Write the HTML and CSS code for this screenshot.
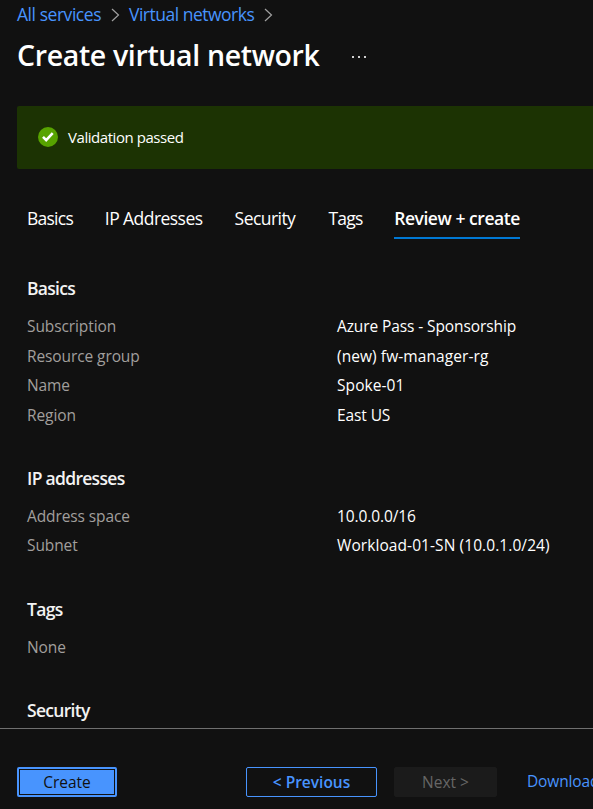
FILE: index.html
```html
<!DOCTYPE html>
<html lang="en">
<head>
<meta charset="utf-8">
<title>Create virtual network</title>
<link rel="stylesheet" href="styles.css">
</head>
<body>
<div class="page">
  <header class="header">
    <nav class="breadcrumb">
      <a class="crumb crumb-all">All services</a>
      <svg class="chevron" viewBox="0 0 9 14"><path d="M1 1l6.5 6L1 13"/></svg>
      <a class="crumb crumb-networks">Virtual networks</a>
      <svg class="chevron" viewBox="0 0 9 14"><path d="M1 1l6.5 6L1 13"/></svg>
    </nav>
    <div class="title-row">
      <h1 class="title">Create virtual network</h1>
      <svg class="more" viewBox="0 0 14 2"><path d="M0 0h2v2H0zM6 0h2v2H6zM12 0h2v2h-2z"/></svg>
    </div>
  </header>
  <div class="banner">
    <svg class="check" viewBox="0 0 20 20"><circle cx="10" cy="10" r="10"/><path d="M5 9.9l3.2 3.3 6.5-7"/></svg>
    <span class="banner-text">Validation passed</span>
  </div>
  <nav class="tabs">
    <a class="tab tab-basics">Basics</a>
    <a class="tab tab-ip">IP Addresses</a>
    <a class="tab tab-security">Security</a>
    <a class="tab tab-tags">Tags</a>
    <a class="tab tab-active">Review + create</a>
  </nav>
  <main class="content">
    <section class="section">
      <h2 class="heading">Basics</h2>
      <dl class="rows">
        <dt>Subscription</dt><dd>Azure Pass - Sponsorship</dd>
        <dt>Resource group</dt><dd class="wide">(new) fw-manager-rg</dd>
        <dt>Name</dt><dd class="wide">Spoke-01</dd>
        <dt>Region</dt><dd>East US</dd>
      </dl>
    </section>
    <section class="section">
      <h2 class="heading">IP addresses</h2>
      <dl class="rows">
        <dt>Address space</dt><dd>10.0.0.0/16</dd>
        <dt>Subnet</dt><dd class="wide">Workload-01-SN (10.0.1.0/24)</dd>
      </dl>
    </section>
    <section class="section">
      <h2 class="heading">Tags</h2>
      <dl class="rows"><dt>None</dt></dl>
    </section>
    <section class="section">
      <h2 class="heading">Security</h2>
    </section>
  </main>
  <footer class="footer">
    <button class="button create">Create</button>
    <button class="button previous">&lt; Previous</button>
    <button class="button next" disabled>Next &gt;</button>
    <a class="download">Download</a>
  </footer>
</div>
</body>
</html>
```
FILE: styles.css
```css
* { box-sizing: border-box; }
body {
  margin: 0;
  background: #111;
  color: #fff;
  font-family: "Open Sans", "Noto Sans", sans-serif;
  font-size: 15.5px;
  overflow: hidden;
}
h1, h2, dl, dd { margin: 0; }
.page { height: 809px; display: flex; flex-direction: column; overflow: hidden; }
.header { height: 106px; padding-left: 17px; flex: none; }
.breadcrumb { display: flex; align-items: center; height: 30px; color: #4894fe; font-size: 17.5px; }
.crumb { height: 30px; line-height: 28px; white-space: nowrap; }
.crumb-all { width: 94px; letter-spacing: -0.45px; }
.crumb-networks { width: 135px; letter-spacing: -0.5px; }
.chevron { width: 9px; height: 14px; flex: none; fill: none; stroke: #a0a0a0; stroke-width: 1.2; }
.chevron + .crumb { margin-left: 9px; }
.title-row { display: flex; align-items: center; height: 50px; }
.title { width: 335px; font-size: 28.5px; font-weight: 600; line-height: 50px; margin-top: -1px; letter-spacing: -0.35px; white-space: nowrap; }
.more { width: 14px; height: 2px; margin-top: 4px; fill: #d0d0d0; }
.banner {
  display: flex; align-items: center; gap: 10px; flex: none;
  height: 63px; margin-left: 17px; padding-left: 21px;
  background: #1c3303; border-radius: 2px 0 0 2px;
}
.check { width: 20px; height: 20px; margin-top: -1px; fill: #57a300; }
.check path { fill: none; stroke: #fff; stroke-width: 2.6; }
.banner-text { margin-top: -2px; font-size: 15px; letter-spacing: -0.45px; }
.tabs { display: flex; flex: none; height: 70px; padding: 28px 0 0 27px; gap: 31.8px; font-size: 17.5px; }
.tab { height: 42px; line-height: 42px; white-space: nowrap; letter-spacing: -0.75px; }
.tab-basics { width: 46px; }
.tab-ip { width: 98px; letter-spacing: -0.55px; }
.tab-security { width: 62px; letter-spacing: -0.55px; }
.tab-tags { width: 34px; }
.tab-active { width: 126px; font-weight: 600; letter-spacing: -0.45px; border-bottom: 2px solid #0078d4; }
.content { height: 489px; flex: none; padding: 37px 0 0 27px; overflow: hidden; }
.section { margin-bottom: 35.5px; }
.heading { font-size: 17.5px; line-height: 25px; font-weight: 600; letter-spacing: -0.7px; margin-bottom: 11px; color: #f3f3f3; }
.rows { display: grid; grid-template-columns: 310px 1fr; grid-auto-rows: 29.6px; line-height: 29.6px; letter-spacing: -0.1px; }
.wide { letter-spacing: 0.08px; }
dt { color: #a19f9d; }
.footer { display: flex; align-items: flex-start; flex: none; height: 81px; padding: 38px 0 0 17px; border-top: 1px solid #707070; }
.button { flex: none; height: 30px; padding: 0; font: 15.5px/26px "Open Sans", "Noto Sans", sans-serif; border-radius: 2px; border: 1px solid #4894fe; }
.create { width: 100px; background: #4894fe; color: #111; border-width: 2px; box-shadow: inset 0 0 0 1px #111; }
.previous { width: 131px; margin-left: 129px; background: #111; color: #4894fe; font-weight: 600; }
.next { width: 103px; margin-left: 17px; background: #1b1b1b; border-color: #1b1b1b; color: #666; }
.download { flex: none; margin-left: 30px; line-height: 29px; letter-spacing: -0.15px; color: #4894fe; }
```
